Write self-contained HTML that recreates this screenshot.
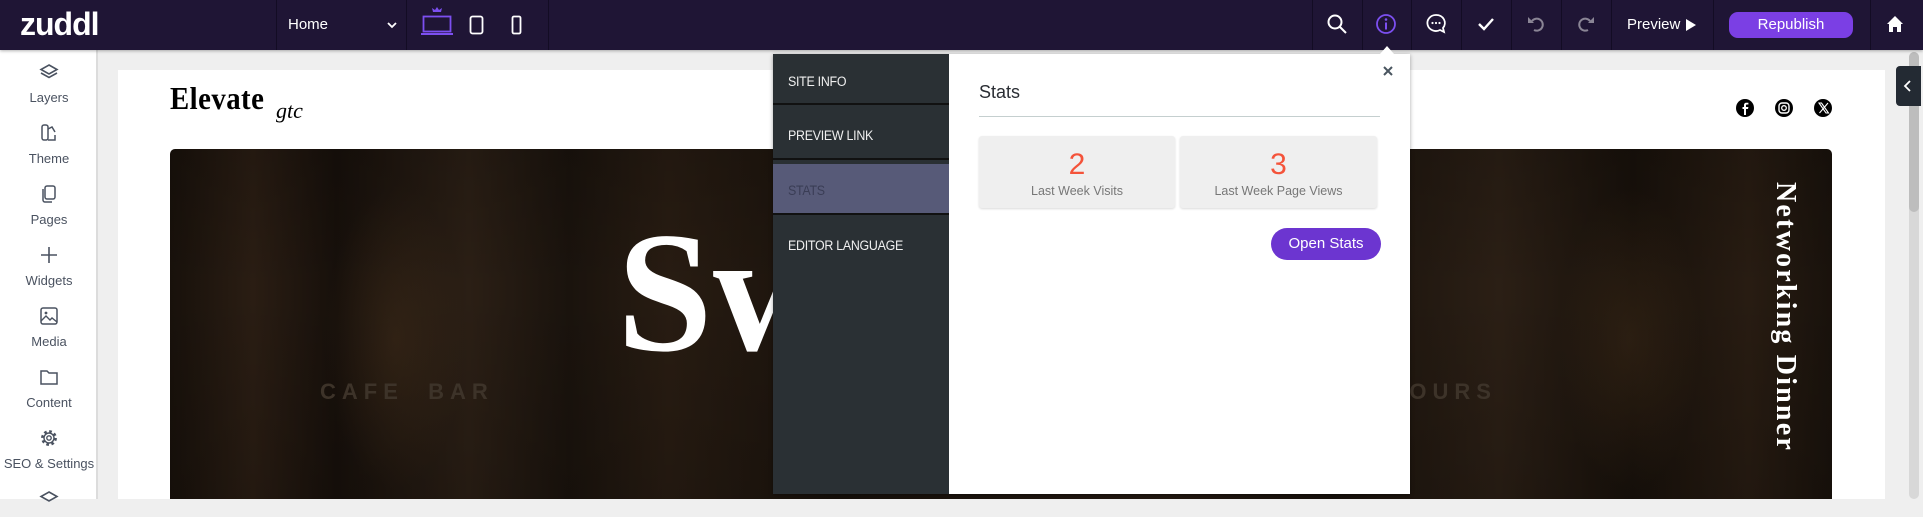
<!DOCTYPE html>
<html><head><meta charset="utf-8"><style>
*{margin:0;padding:0;box-sizing:border-box}
body{width:1923px;height:499px;overflow:hidden;background:#efefef;font-family:"Liberation Sans",sans-serif;position:relative}
.abs{position:absolute}
#top{left:0;top:0;width:1923px;height:50px;background:#1f1535;box-shadow:0 1px 3px rgba(0,0,0,.3);z-index:5}
.sep{position:absolute;top:0;width:1px;height:50px;background:#130c24}
.ico{position:absolute;top:13px}
#side{left:0;top:50px;width:98px;height:449px;background:#fff;border-right:2px solid #dcdcdc}
.si{position:absolute;left:0;width:98px;text-align:center;font-size:13px;color:#4a5260}
.si svg{display:block;margin:0 auto 8px}
#page{left:118px;top:70px;width:1767px;height:429px;background:#fff}
#hero{left:170px;top:149px;width:1662px;height:350px;border-radius:5px 5px 0 0;overflow:hidden;
background:linear-gradient(90deg,#18110b 0%,#2a1d13 5%,#17100b 10%,#2b1f15 18%,#1a130d 24%,#281c12 30%,#19120c 40%,#281c13 60%,#19120c 70%,#2b1f15 80%,#18110b 88%,#281c12 95%,#19120c 100%)}
#pop{left:773px;top:54px;width:637px;height:440px;background:#fff;box-shadow:0 1px 4px rgba(0,0,0,.35);z-index:6}
#nav{left:0;top:0;width:176px;height:440px;background:#2a3034}
.ni{position:absolute;left:15px;font-size:13.5px;color:#f0f0f0;letter-spacing:-.3px;transform:scaleX(.92);transform-origin:left}
.nsep{position:absolute;left:0;width:176px;height:2px;background:#111}
.card{position:absolute;top:82px;height:72px;background:#efefef;border-radius:3px;box-shadow:0 1px 2px rgba(0,0,0,.15);text-align:center}
.card b{display:block;font-weight:normal;color:#f4533a;font-size:30px;margin-top:12px;line-height:34px}
.card span{display:block;color:#777;font-size:12.5px;margin-top:2px}
</style></head><body>
<div id="top" class="abs">
 <div class="abs" style="left:20px;top:6px;color:#fff;font-size:32px;font-weight:bold;letter-spacing:-1px">zuddl</div>
 <div class="sep" style="left:276px"></div>
 <div class="abs" style="left:288px;top:16px;color:#fff;font-size:15px">Home</div>
 <svg class="abs" style="left:387px;top:21px" width="10" height="8"><path d="M1 2l4 4 4-4" stroke="#fff" stroke-width="1.8" fill="none"/></svg>
 <div class="sep" style="left:406px"></div>
 <svg class="abs" style="left:420px;top:6px" width="34" height="30"><path d="M13 6l-1-4 3 2 2-3 2 3 3-2-1 4z" fill="#7c4ff0"/><rect x="3.5" y="10.5" width="27" height="15" fill="none" stroke="#7c4ff0" stroke-width="1.8"/><rect x="1" y="27" width="32" height="2" fill="#7c4ff0"/></svg>
 <svg class="abs" style="left:469px;top:15px" width="16" height="20"><rect x="1.5" y="1.5" width="12" height="17" rx="2" fill="none" stroke="#fff" stroke-width="1.8"/></svg>
 <svg class="abs" style="left:511px;top:15px" width="12" height="20"><rect x="1.5" y="1.5" width="8" height="17" rx="1.5" fill="none" stroke="#fff" stroke-width="1.8"/></svg>
 <div class="sep" style="left:548px"></div>
 <div class="sep" style="left:1312px"></div><div class="sep" style="left:1362px"></div><div class="sep" style="left:1411px"></div><div class="sep" style="left:1461px"></div><div class="sep" style="left:1511px"></div><div class="sep" style="left:1561px"></div><div class="sep" style="left:1611px"></div><div class="sep" style="left:1713px"></div><div class="sep" style="left:1870px"></div>
 <svg class="ico" style="left:1326px" width="22" height="22"><circle cx="9" cy="9" r="6.5" stroke="#fff" stroke-width="2" fill="none"/><path d="M14 14l6 6" stroke="#fff" stroke-width="2"/></svg>
 <svg class="ico" style="left:1375px" width="22" height="22"><circle cx="11" cy="11" r="9" stroke="#7c4ff0" stroke-width="1.8" fill="none"/><circle cx="11" cy="6.5" r="1.3" fill="#7c4ff0"/><path d="M11 9.5v7" stroke="#7c4ff0" stroke-width="2"/></svg>
 <svg class="ico" style="left:1425px" width="22" height="22"><path d="M11 2a8.5 8 0 1 0 4 15l4 2-1-4a8.5 8 0 0 0-7-13z" stroke="#fff" stroke-width="1.8" fill="none"/><circle cx="7.5" cy="10" r="1.1" fill="#fff"/><circle cx="11" cy="10" r="1.1" fill="#fff"/><circle cx="14.5" cy="10" r="1.1" fill="#fff"/></svg>
 <svg class="ico" style="left:1475px" width="22" height="22"><path d="M4 11l5 5 9-10" stroke="#fff" stroke-width="2.4" fill="none"/></svg>
 <svg class="ico" style="left:1525px" width="22" height="22"><path d="M7 8a6 6 0 1 1 2 9" stroke="#8a8595" stroke-width="2" fill="none"/><path d="M3 4v6h6z" fill="#8a8595"/></svg>
 <svg class="ico" style="left:1575px" width="22" height="22"><path d="M15 8a6 6 0 1 0-2 9" stroke="#8a8595" stroke-width="2" fill="none"/><path d="M19 4v6h-6z" fill="#8a8595"/></svg>
 <div class="abs" style="left:1627px;top:16px;color:#fff;font-size:15px">Preview</div>
 <svg class="abs" style="left:1685px;top:18px" width="12" height="14"><path d="M1 1l10 6-10 6z" fill="#fff"/></svg>
 <div class="abs" style="left:1729px;top:12px;width:124px;height:26px;border-radius:9px;background:#7b3fe4;color:#fff;font-size:15px;text-align:center;line-height:26px">Republish</div>
 <svg class="abs" style="left:1886px;top:15px" width="18" height="18"><path d="M9 1l8 8h-2v8h-4v-5H7v5H3V9H1z" fill="#fff"/></svg>
</div>
<div id="side" class="abs">
 <div class="si" style="top:12px"><svg width="20" height="20"><path d="M10 3l8 4.5-8 4.5-8-4.5zM2 11l8 4.5 8-4.5" stroke="#4a5260" stroke-width="1.6" fill="none"/></svg>Layers</div>
 <div class="si" style="top:73px"><svg width="20" height="20"><rect x="3" y="2" width="6" height="15" rx="2" stroke="#4a5260" stroke-width="1.5" fill="none"/><path d="M9 6l4-2 3 5M9 17h7v-5" stroke="#4a5260" stroke-width="1.5" fill="none"/></svg>Theme</div>
 <div class="si" style="top:134px"><svg width="20" height="20"><rect x="6" y="2" width="10" height="13" rx="2" stroke="#4a5260" stroke-width="1.5" fill="none"/><path d="M4 5v11a2 2 0 0 0 2 2h7" stroke="#4a5260" stroke-width="1.5" fill="none"/></svg>Pages</div>
 <div class="si" style="top:195px"><svg width="20" height="20"><path d="M10 2v16M2 10h16" stroke="#4a5260" stroke-width="1.6"/></svg>Widgets</div>
 <div class="si" style="top:256px"><svg width="20" height="20"><rect x="2" y="2" width="16" height="16" rx="2" stroke="#4a5260" stroke-width="1.5" fill="none"/><path d="M2 15l5-5 4 4 2-2 5 4" stroke="#4a5260" stroke-width="1.4" fill="none"/><circle cx="7" cy="7" r="1.4" fill="#4a5260"/></svg>Media</div>
 <div class="si" style="top:317px"><svg width="20" height="20"><path d="M2 4h6l2 2h8v11H2z" stroke="#4a5260" stroke-width="1.5" fill="none"/></svg>Content</div>
 <div class="si" style="top:378px"><svg width="20" height="20"><circle cx="10" cy="10" r="6.5" stroke="#4a5260" stroke-width="2.8" stroke-dasharray="2.6 2.5" fill="none"/><circle cx="10" cy="10" r="5" stroke="#4a5260" stroke-width="1.4" fill="#fff"/><circle cx="10" cy="10" r="2.2" stroke="#4a5260" stroke-width="1.4" fill="none"/></svg>SEO &amp; Settings</div>
 <div class="si" style="top:439px"><svg width="20" height="20"><path d="M10 3l8 4.5-8 4.5-8-4.5z" stroke="#4a5260" stroke-width="1.6" fill="none"/></svg></div>
</div>
<div id="page" class="abs"></div>
<div class="abs" style="left:170px;top:80px;font-family:'Liberation Serif',serif;font-weight:bold;font-size:32px;color:#000;letter-spacing:.5px;transform:scaleX(.9);transform-origin:left">Elevate</div>
<div class="abs" style="left:276px;top:98px;font-family:'Liberation Serif',serif;font-style:italic;font-size:22px;color:#000">gtc</div>
<svg class="abs" style="left:1735px;top:98px" width="100" height="20"><circle cx="10" cy="10" r="9" fill="#000"/><path d="M11 17v-6h2l.4-2H11V7.5c0-.7.3-1 1-1h1.4V4.7h-2c-1.7 0-2.4 1-2.4 2.6V9H7.5v2H9v6z" fill="#fff"/><circle cx="49" cy="10" r="9" fill="#000"/><rect x="44" y="5" width="10" height="10" rx="3" stroke="#fff" stroke-width="1.4" fill="none"/><circle cx="49" cy="10" r="2.3" stroke="#fff" stroke-width="1.3" fill="none"/><circle cx="88" cy="10" r="9" fill="#000"/><path d="M84 5h2.5l7 10H91zM93 5l-8.5 10" stroke="#fff" stroke-width="1.1" fill="none"/></svg>
<div id="hero" class="abs">
 <div class="abs" style="left:0;top:0;width:1662px;height:350px;background:radial-gradient(ellipse 70px 150px at 225px 190px,rgba(80,55,30,.35),transparent),radial-gradient(ellipse 70px 150px at 1460px 190px,rgba(80,55,30,.35),transparent),linear-gradient(180deg,rgba(0,0,0,.15),rgba(0,0,0,0) 40%,rgba(0,0,0,.15))"></div>
 <div class="abs" style="left:150px;top:230px;color:#3d3329;font-size:22px;letter-spacing:6px;font-weight:bold">CAFE&nbsp; BAR</div>
 <div class="abs" style="left:1215px;top:230px;color:#3d3329;font-size:22px;letter-spacing:6px;font-weight:bold">MOURS</div>
 <div class="abs" style="left:447px;top:58px;font-family:'Liberation Serif',serif;font-weight:bold;font-size:172px;color:#fff;line-height:1">Sw</div>
 <div class="abs" style="left:1600px;top:33px;writing-mode:vertical-rl;font-family:'Liberation Serif',serif;font-weight:bold;font-size:28px;color:#fff;letter-spacing:2.2px;line-height:30px">Networking Dinner</div>
</div>
<div class="abs" style="left:1896px;top:66px;width:25px;height:40px;background:#232a33;border-radius:4px 0 0 4px;z-index:3"></div>
<svg class="abs" style="left:1903px;top:80px;z-index:4" width="10" height="12"><path d="M7 1L2 6l5 5" stroke="#fff" stroke-width="1.8" fill="none"/></svg>
<div class="abs" style="left:1909px;top:52px;width:10px;height:447px;background:#d8d8d8;border-radius:5px"></div>
<div class="abs" style="left:1909px;top:52px;width:10px;height:160px;background:#bdbdbd;border-radius:5px"></div>
<div class="abs" style="left:1380px;top:46px;width:0;height:0;border-left:7px solid transparent;border-right:7px solid transparent;border-bottom:8px solid #fff;z-index:7"></div>
<div id="pop" class="abs">
 <div id="nav" class="abs">
  <div class="ni" style="top:20px">SITE INFO</div>
  <div class="nsep" style="top:49px"></div>
  <div class="ni" style="top:74px">PREVIEW LINK</div>
  <div class="nsep" style="top:104px"></div>
  <div class="abs" style="left:0;top:110px;width:176px;height:50px;background:#575a78"></div>
  <div class="ni" style="top:129px;color:#3a3d55">STATS</div>
  <div class="nsep" style="top:159px"></div>
  <div class="ni" style="top:184px">EDITOR LANGUAGE</div>
 </div>
 <svg class="abs" style="left:610px;top:12px" width="10" height="10"><path d="M1 1l8 8M9 1L1 9" stroke="#4a5560" stroke-width="2"/></svg>
 <div class="abs" style="left:206px;top:28px;font-size:18px;color:#2a2d33">Stats</div>
 <div class="abs" style="left:206px;top:62px;width:401px;height:1px;background:#c5cfcf"></div>
 <div class="card" style="left:206px;width:196px"><b>2</b><span>Last Week Visits</span></div>
 <div class="card" style="left:407px;width:197px"><b>3</b><span>Last Week Page Views</span></div>
 <div class="abs" style="left:498px;top:174px;width:110px;height:32px;border-radius:16px;background:#6c35d0;color:#fff;font-size:15px;text-align:center;line-height:32px">Open Stats</div>
</div>
</body></html>
